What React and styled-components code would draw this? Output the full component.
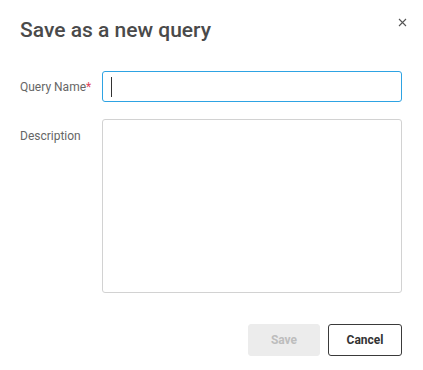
import React from 'react';
import styled, { createGlobalStyle } from 'styled-components';

const GlobalStyle = createGlobalStyle`
  body {
    margin: 0;
    background: #fff;
    font-family: Roboto, "Liberation Sans", sans-serif;
  }
`;

const Dialog = styled.div`
  position: relative;
  width: 423px;
  height: 370px;
  box-sizing: border-box;
  padding: 18px 21px 0 20px;
  display: flex;
  flex-direction: column;
`;

const Title = styled.h2`
  margin: 0;
  font-size: 21px;
  line-height: 24px;
  font-weight: 500;
  color: #4a4a4a;
`;

const CloseButton = styled.button`
  position: absolute;
  top: 16px;
  right: 15px;
  width: 12px;
  height: 12px;
  padding: 0;
  border: 0;
  background: none;
  display: flex;
  align-items: center;
  justify-content: center;
  cursor: pointer;
`;

const Form = styled.div`
  margin-top: 29px;
  display: flex;
  flex-direction: column;
  gap: 17px;
`;

const Row = styled.div`
  display: grid;
  grid-template-columns: 82px 1fr;
  align-items: ${(p) => (p.$top ? 'start' : 'center')};
`;

const Label = styled.label`
  font-size: 12px;
  color: #666;
  padding-top: ${(p) => (p.$top ? '10px' : '0')};
`;

const Required = styled.span`
  color: #e0455a;
`;

const Input = styled.div`
  height: 31px;
  box-sizing: border-box;
  border: 1px solid ${(p) => (p.$focused ? '#2ea3e3' : '#d2d2d2')};
  border-radius: 3px;
  display: flex;
  align-items: center;
  padding-left: 8px;
`;

const Caret = styled.span`
  width: 1px;
  height: 20px;
  background: #333;
`;

const TextArea = styled.div`
  height: 174px;
  box-sizing: border-box;
  border: 1px solid #d2d2d2;
  border-radius: 3px;
`;

const Actions = styled.div`
  margin-top: 31px;
  display: flex;
  justify-content: flex-end;
  gap: 8px;
`;

const Button = styled.button`
  height: 32px;
  box-sizing: border-box;
  border-radius: 3px;
  font-family: Roboto, "Liberation Sans", sans-serif;
  font-size: 12px;
  font-weight: 700;
  padding: 0;
  width: ${(p) => (p.$primary ? '72px' : '74px')};
  border: 1px solid ${(p) => (p.$primary ? '#ececec' : '#3a3a3a')};
  background: ${(p) => (p.$primary ? '#ececec' : '#fff')};
  color: ${(p) => (p.$primary ? '#bdbdbd' : '#333')};
`;

export default function App() {
  return (
    <>
      <GlobalStyle />
      <Dialog>
        <Title>Save as a new query</Title>
        <CloseButton aria-label="Close">
          <svg width="9" height="9" viewBox="0 0 9 9">
            <path d="M1 1L8 8M8 1L1 8" stroke="#555" strokeWidth="1.1" />
          </svg>
        </CloseButton>
        <Form>
          <Row>
            <Label>
              Query Name<Required>*</Required>
            </Label>
            <Input $focused>
              <Caret />
            </Input>
          </Row>
          <Row $top>
            <Label $top>Description</Label>
            <TextArea />
          </Row>
        </Form>
        <Actions>
          <Button $primary disabled>Save</Button>
          <Button>Cancel</Button>
        </Actions>
      </Dialog>
    </>
  );
}
